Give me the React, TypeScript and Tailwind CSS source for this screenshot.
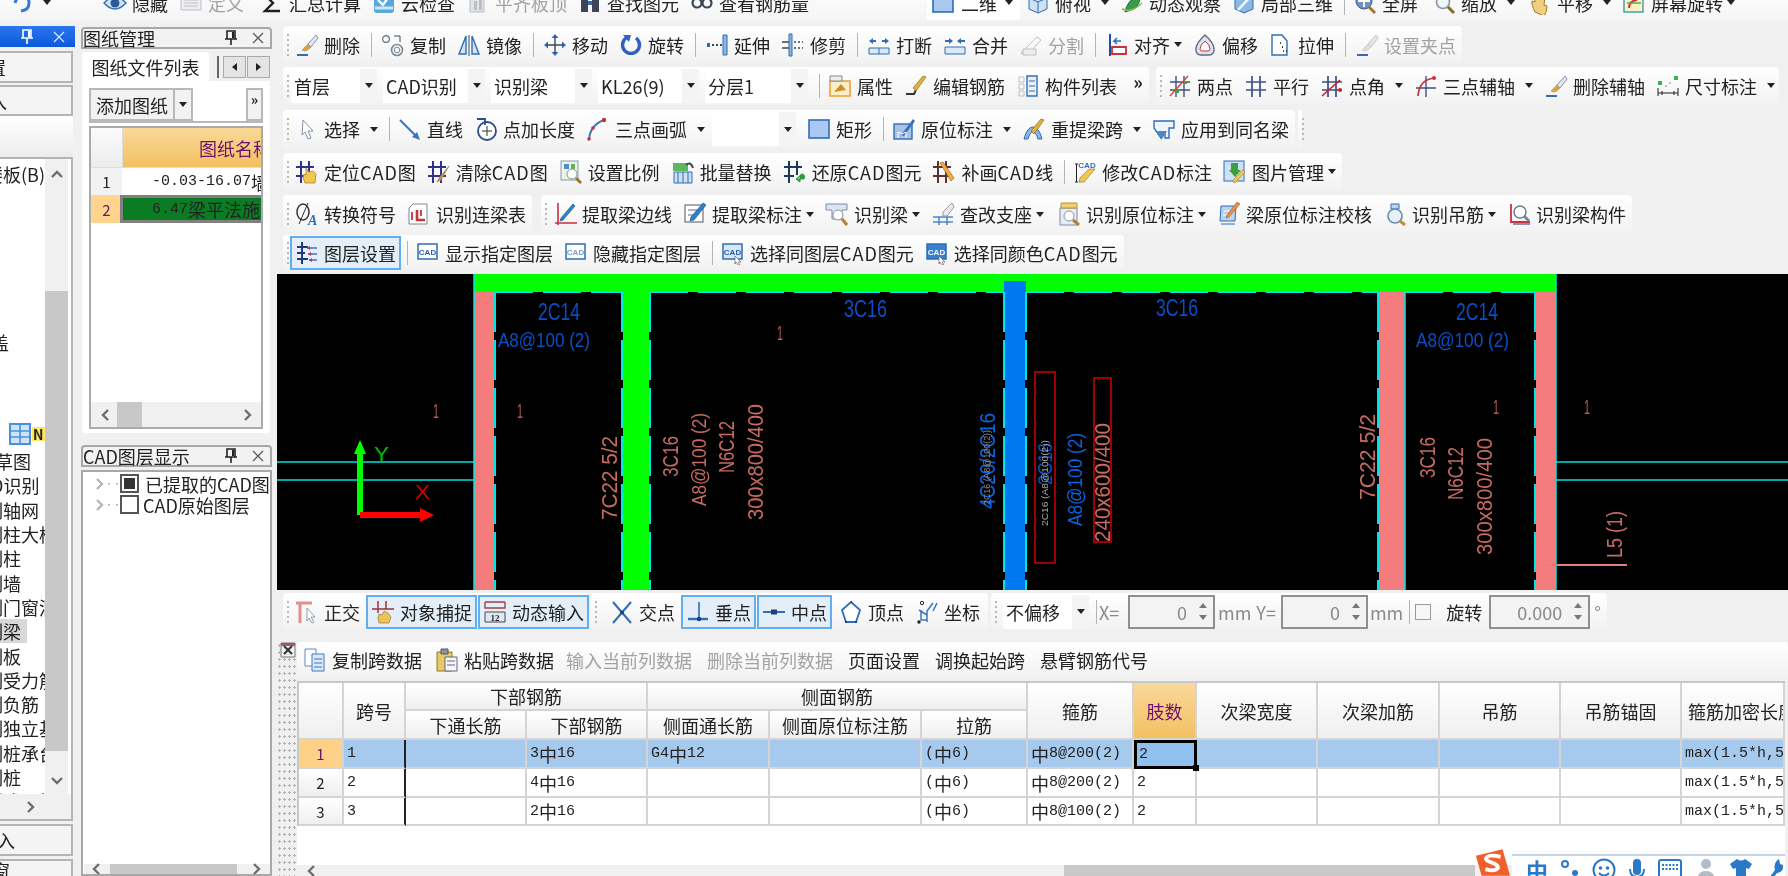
import React from "react";

const S = ({ children }: { children: React.ReactNode }) => (
  <svg viewBox="0 0 24 24" fill="none" className="h-6 w-6 shrink-0">
    {children}
  </svg>
);

const blue = "#2f6db5";
const dark = "#3c4658";
const red = "#c8323c";
const gold = "#e2b23e";
const pale = "#b9c0c8";

const brush = (c = "#8a90b0", h = "#d9a63c") => (
  <S>
    <path d="M21 2l-8 9 3 3 7-9z" fill="#e4e6f0" stroke={c} />
    <path d="M13 11l-6 6q4 3 9-3z" fill={h} stroke={c} strokeWidth=".6" />
    <path d="M2 22h11" stroke={blue} strokeWidth="2" />
  </S>
);
const pencil = (c = gold) => <path d="M22 3l-3-1-10 12 3 3z" fill={c} stroke="#8a6a20" strokeWidth=".7" />;
const glass = (c = "#8a6a20") => (
  <>
    <circle cx="11" cy="11" r="6.5" fill="#eef5fb" stroke="#8894a4" strokeWidth="1.6" />
    <path d="M16 16l6 6" stroke={c} strokeWidth="3" />
  </>
);
const cadBox = (fill: string, tc: string) => (
  <>
    <rect x="2" y="3" width="19" height="15" fill={fill} stroke={blue} strokeWidth="1.5" />
    <text x="11.5" y="14" textAnchor="middle" fontSize="8" fontWeight="700" fill={tc} fontFamily="Liberation Sans">CAD</text>
  </>
);
const axis = (
  <>
    <path d="M8 2v21M16 2v21M2 8h20M2 16h20" stroke="#3d4f86" strokeWidth="1.7" />
  </>
);

const ic: Record<string, React.ReactNode> = {
  eye: (
    <S>
      <path d="M1 12q11-12 22 0q-11 12-22 0z" fill="#cfe2f5" stroke={blue} strokeWidth="1.4" />
      <circle cx="12" cy="12" r="4.5" fill="#2c5a94" />
    </S>
  ),
  def: <S><path d="M2 5h20v14H2z" fill="#eee" stroke={pale} /><path d="M5 9h14M5 12h14M5 15h14" stroke={pale} /></S>,
  sigma: <S><path d="M20 4H5l8 8-8 8h15" stroke="#1f1f1f" strokeWidth="2.4" /></S>,
  cloud: <S><rect x="2" y="3" width="20" height="19" rx="3" fill="#58a8e0" /><path d="M6 9l5 5 7-10" stroke="#fff" strokeWidth="2.4" /><path d="M3 17h18" stroke="#cfe8f8" strokeWidth="3" /></S>,
  flush: <S><path d="M4 3h14v18H4z" fill="#e2e2e2" stroke={pale} /><path d="M8 10h3v9H8zM13 7h3v12h-3z" fill={pale} /></S>,
  find: <S><path d="M3 6h7v15H3zM14 6h7v15h-7z" fill={dark} /><path d="M10 10h4v4h-4z" fill={blue} /></S>,
  rebar: <S><circle cx="7" cy="12" r="4.5" stroke={dark} strokeWidth="2.2" /><circle cx="17" cy="12" r="4.5" stroke={dark} strokeWidth="2.2" /><path d="M11 12h2" stroke={dark} strokeWidth="2" /></S>,
  flat: <S><rect x="2" y="3" width="20" height="18" fill="#a9c8f0" stroke={blue} strokeWidth="1.6" /></S>,
  top: <S><path d="M3 7l9-4 9 4v11l-9 4-9-4z" fill="#cfe0f2" stroke={blue} /><path d="M3 7l9 4 9-4M12 11v11" stroke={blue} /></S>,
  orbit: <S><path d="M5 21q2-12 15-18q1 10-6 15z" fill="#3e9a48" stroke="#28703a" /><path d="M2 18q10 4 20-6" stroke="#8ab858" strokeWidth="1.5" /></S>,
  local: <S><path d="M3 7l9-4 9 4v11l-9 4-9-4z" fill="#8cb8e4" stroke={blue} /><path d="M6 19L20 4" stroke="#f4f8fc" strokeWidth="2.5" /></S>,
  full: <S><circle cx="11" cy="10" r="8" fill="#6f92c4" stroke="#3a5a8c" /><path d="M11 4v12M5 10h12" stroke="#fff" strokeWidth="2" /><path d="M16 16l6 6" stroke="#a07a28" strokeWidth="3" /></S>,
  zoom: <S>{glass()}</S>,
  hand: <S><path d="M7 21q-4-8-3-11l3 1V4l3 5 2-7 2 7 3-4-1 9 3 1q0 6-3 10z" fill="#f0cf80" stroke="#a07a28" /></S>,
  screen: <S><rect x="2" y="3" width="19" height="18" fill="#fbf2c4" stroke="#48a0a8" strokeWidth="1.5" /><path d="M7 17q0-7 8-8" stroke={red} strokeWidth="2" /><path d="M5 12h14" stroke="#64a850" strokeWidth="1.5" /></S>,
  brush: brush(),
  copy: <S><circle cx="5" cy="6" r="3.4" stroke="#667488" strokeWidth="1.2" /><circle cx="16" cy="17" r="5.5" stroke="#7b8898" strokeWidth="1.6" /><circle cx="16" cy="17" r="2.8" stroke="#7b8898" /><path d="M13 3h6v6" stroke={dark} /></S>,
  mirror: <S><path d="M12 2v21" stroke={dark} /><path d="M9 3L2 21h7zM15 3l7 18h-7z" fill="#d5e4f4" stroke={blue} strokeWidth="1.4" /></S>,
  move: <S><path d="M12 1l3.5 4h-7zM12 23l3.5-4h-7zM1 12l4-3.5v7zM23 12l-4-3.5v7z" fill={blue} /><path d="M12 4v16M4 12h16" stroke={dark} strokeWidth="1.4" /></S>,
  rotate: <S><path d="M7 5a8.5 8.5 0 1 0 10 0" stroke="#2f5fc0" strokeWidth="3.4" /><path d="M4 2l8 0-2 7z" fill="#2f5fc0" /></S>,
  extend: <S><path d="M18 2h4v20h-4z" fill="#8fb8e0" stroke={blue} /><path d="M2 10h3v4H2z" fill={blue} /><path d="M7 12h10" stroke={dark} strokeDasharray="2 2" strokeWidth="2" /></S>,
  trim: <S><path d="M8 1h3v22H8z" fill="#8fb8e0" stroke={blue} /><path d="M1 9h7M1 15h7" stroke={dark} strokeWidth="1.5" /><path d="M13 9h9M13 15h9" stroke={dark} strokeDasharray="2 2" strokeWidth="1.5" /></S>,
  break: <S><path d="M2 15h20v6H2z" fill="#dbe8f6" stroke={blue} /><path d="M2 8l4-3v2h3v2H6v2zM22 8l-4-3v2h-3v2h3v2z" fill={blue} /><path d="M12 15v6" stroke={blue} /></S>,
  merge: <S><path d="M2 14h20v7H2z" fill="#dbe8f6" stroke={blue} /><path d="M10 8L6 5v2H2v2h4v2zM14 8l4-3v2h4v2h-4v2z" fill={blue} /></S>,
  split: <S><path d="M2 20L18 4l4 3-14 15z" stroke={pale} /><path d="M4 16l13 0 0 6H4z" fill="#eee" stroke={pale} /></S>,
  align: <S><path d="M5 1v22" stroke="#274a9c" strokeWidth="2" /><path d="M7 14h14v7H7z" fill="#fff" stroke={red} strokeWidth="1.8" /><path d="M16 8H9l3-3M9 8l3 3" stroke={blue} strokeWidth="1.5" /></S>,
  offset: <S><path d="M12 2q9 8 9 14a5 5 0 0 1-5 6H8a5 5 0 0 1-5-6q0-6 9-14z" fill="#dde4ec" stroke="#5a6a80" strokeWidth="1.4" /><path d="M12 8q5 4 5 8a2 2 0 0 1-2 2H9a2 2 0 0 1-2-2q0-4 5-8z" fill="#fff" stroke={red} /></S>,
  stretch: <S><path d="M3 2h10l5 6v14H3z" fill="#fff" stroke={blue} strokeWidth="1.4" /><path d="M11 10h2M13 14h3M14 18h5" stroke={dark} strokeWidth="2" strokeDasharray="1 2" /></S>,
  gripPt: brush("#c4c4c4", "#dddddd"),
  prop: <S><rect x="2" y="7" width="20" height="15" fill="#fdeec8" stroke="#f0a038" strokeWidth="1.6" /><path d="M2 2h12v5H2z" fill="#eee" stroke="#888" /><path d="M6 18l7-8 5 6z" fill="#c89028" /></S>,
  edit: <S><path d="M2 20h8l2-4" stroke="#333" strokeWidth="2" />{pencil()}</S>,
  list: <S><path d="M3 3h5v5H3zM3 10h5v5H3zM3 17h5v5H3z" stroke={pale} /><path d="M11 2h10v20H11z" fill="#e8f0f8" stroke={blue} strokeWidth="1.4" /><path d="M13 7h6M13 12h6M13 17h6" stroke={blue} /></S>,
  two: <S><path d="M8 2v21M16 2v21M2 8h20M2 16h20" stroke="#3d4f86" strokeWidth="1.4" /><path d="M2 22L20 2" stroke="#d84040" strokeWidth="1.4" /><path d="M8 16h3v3H8zM16 7h3v3h-3z" fill="#45a045" /></S>,
  parallel: <S>{axis}</S>,
  angle: <S>{axis}<path d="M2 22L20 6" stroke="#d02020" strokeWidth="1.6" /><circle cx="20" cy="16" r="2" fill="#d02020" /></S>,
  arcAux: <S><path d="M12 2v21M2 14h20" stroke="#3d4f86" strokeWidth="1.4" /><path d="M4 22Q5 6 20 4" stroke={red} strokeWidth="1.7" /><circle cx="20" cy="4" r="2" fill={red} /></S>,
  dim: <S><path d="M2 7h4v4H2zM18 2h4v4h-4z" fill="#3cb44a" /><path d="M2 14v8M22 14v8M2 19h20" stroke="#222" /><path d="M6 17v4M18 17v4" stroke="#222" /><path d="M9 12h2M13 9h2" stroke="#888" /></S>,
  cursor: <S><path d="M8 3l10 11h-5l3 7-3 1-3-7-3 3z" fill="#fff" stroke="#8292a6" /></S>,
  line: <S><path d="M2 3l18 18" stroke="#3576b8" strokeWidth="2" /><path d="M22 23l-8-3 5-5z" fill="#3576b8" /></S>,
  circ: <S><circle cx="13" cy="14" r="9" fill="#fff" stroke="#2a4f88" strokeWidth="1.8" /><path d="M13 9v10M8 14h10" stroke="#333" /><path d="M3 2h8v6" stroke="#2a4f88" strokeWidth="1.8" /></S>,
  arc: <S><path d="M3 23Q4 8 18 3" stroke="#3d7ab8" strokeWidth="2" /><circle cx="18" cy="3" r="2.2" fill={red} /><circle cx="7" cy="11" r="1.8" fill={red} /><circle cx="3" cy="22" r="1.8" fill={red} /></S>,
  rect: <S><rect x="2" y="3" width="20" height="18" fill="#aac8f2" stroke={blue} strokeWidth="1.6" /></S>,
  mark: <S><rect x="2" y="7" width="18" height="15" fill="#a8c4e4" stroke={blue} strokeWidth="1.4" /><path d="M9 18L21 2l2 2-11 15z" fill="#3670c0" /><path d="M6 21v-6l4 2 4-2v6" stroke="#fff" /></S>,
  refetch: <S><path d="M2 22q3-12 9-12t9 12h-4q-2-7-5-7t-5 7z" fill="#8cb4e0" stroke={blue} />{pencil()}</S>,
  apply: <S><path d="M2 4h20v7l-5 0v10h-4v-6H9v6L2 11z" fill="#eef4fb" stroke={blue} strokeWidth="1.4" /><path d="M5 14h10l-5 8z" fill="#4e86cc" /></S>,
  locate: <S><path d="M6 1v22M14 1v22M1 7h18M1 16h18" stroke="#32328c" strokeWidth="2" /><path d="M10 23q-3-5-1-9l2 1V8l3 4 4-1 3 3-1 9z" fill="#f0c850" stroke="#a07a28" strokeWidth=".7" /></S>,
  clear: <S><path d="M6 1v22M14 1v22M1 7h18M1 16h18" stroke="#32328c" strokeWidth="2" /><path d="M22 6L12 18l-2 4 4-2z" fill="#d89030" stroke="#888" strokeWidth=".7" /></S>,
  scale: <S><rect x="2" y="1" width="17" height="19" fill="#f2f0d8" stroke="#78a0c0" /><path d="M5 4h5v5H5z" fill="#4a90d0" /><path d="M12 4h4v5h-4z" fill="#60b060" /><circle cx="13" cy="14" r="5" fill="#fff" stroke="#8894a4" /><path d="M17 18l5 5" stroke="#a07a28" strokeWidth="3" /></S>,
  batch: <S><path d="M2 3h15v8H2z" fill="#5cb860" /><path d="M3 12h18v11H3z" fill="#cfe0f0" stroke={blue} /><path d="M7 12v11M12 12v11M17 12v11" stroke={blue} /><path d="M15 5q5-4 7 3" stroke={dark} strokeWidth="2" /></S>,
  restore: <S><path d="M6 1v22M14 1v14M1 7h18M1 16h10" stroke="#1a3a5a" strokeWidth="2" /><path d="M13 19h8q2-5-3-5M13 19l4-3v6z" fill="#2f9a46" stroke="#2f9a46" /></S>,
  draw: <S><path d="M6 1v22M14 1v22M1 7h18M1 16h18" stroke="#5a3232" strokeWidth="2" /><path d="M8 3l3-1 11 16-3 3z" fill="#f0b040" stroke="#a85a20" strokeWidth=".7" /></S>,
  modcad: <S><path d="M2 4h3M3.5 4v18M2 22h3" stroke="#222" /><text x="14" y="8" textAnchor="middle" fontSize="8" fontWeight="700" fill={blue} fontFamily="Liberation Sans">CAD</text><path d="M22 9L11 22H6l1-4 9-9z" fill="#f0c850" stroke="#a07a28" strokeWidth=".7" /></S>,
  pic: <S><rect x="1" y="1" width="20" height="20" fill="#cfe0f4" stroke={blue} /><path d="M8 3h7v7h3l-6 7-6-7h2z" fill="#3ca040" /><path d="M22 12L12 23l-2-1 1-3 9-9z" fill="#f0c850" stroke="#a07a28" strokeWidth=".6" /></S>,
  phi: <S><ellipse cx="8" cy="10" rx="6" ry="8" stroke="#333" strokeWidth="1.5" /><path d="M13 1L4 22" stroke="#333" /><text x="13" y="23" fontSize="14" fontWeight="700" fontStyle="italic" fill="#2f6db5" fontFamily="Liberation Serif">A</text></S>,
  ltable: <S><path d="M6 2h14v20H2V6z" fill="#fff" stroke="#7a8898" /><path d="M10 8v10h8" stroke={red} strokeWidth="2.6" /><path d="M5 10v8M14 8v6" stroke={red} strokeWidth="1.8" /></S>,
  edge: <S><path d="M5 1v22M2 21h22" stroke={red} strokeWidth="1.6" /><path d="M22 4L10 18l-3 1 1-3L20 2z" fill="#2f80c8" stroke="#1f5a98" strokeWidth=".7" /></S>,
  mk: <S><rect x="2" y="3" width="18" height="17" fill="#fff" stroke="#556" /><path d="M5 8h9M5 13h9" stroke="#668" /><path d="M23 3L11 18l-4 1 1-4L20 1z" fill="#2f80c8" stroke="#1f5a98" strokeWidth=".7" /></S>,
  funnel: <S><path d="M1 2h21v6h-5v9H7V8H1z" fill="#dbe6f2" stroke="#7a8ca4" /><circle cx="13" cy="13" r="5" fill="#fff" stroke="#8894a4" /><path d="M17 17l5 6" stroke="#b08030" strokeWidth="3" /></S>,
  support: <S><path d="M2 15h20M2 20h20M8 15v8M16 15v8" stroke="#4a8ad0" strokeWidth="1.6" /><path d="M21 1l-9 9v4h4l7-9z" fill="#e8eaf0" stroke="#99a" /></S>,
  orig: <S><path d="M3 6h17v17H3z" fill="#e6edf5" stroke="#7a8ca4" /><path d="M4 1h16v5H4z" fill="#f0d070" stroke="#b89030" /><circle cx="12" cy="14" r="5" fill="#fff" stroke="#8894a4" /><path d="M16 18l6 5" stroke="#b08030" strokeWidth="3" /></S>,
  verify: <S><path d="M4 4h15l-1 15H3z" fill="#b8d4f0" stroke={blue} /><path d="M7 9h8M6 13h8" stroke="#fff" /><path d="M23 2L12 15l-3 1 1-3L20 0z" fill="#e89048" stroke="#a85a20" strokeWidth=".6" /><path d="M4 22h14" stroke={blue} /></S>,
  hang: <S><path d="M8 2h8v5H8z" fill="#bcd4ee" stroke={blue} /><circle cx="12" cy="14" r="7" fill="#e4f0fa" stroke="#6a8ab0" strokeWidth="1.6" /><path d="M17 19l5 4" stroke="#c09030" strokeWidth="3" /></S>,
  comp: <S><path d="M4 2v18h19" stroke={red} strokeWidth="1.8" /><circle cx="13" cy="10" r="6" fill="#fff" stroke="#6a7a90" strokeWidth="1.5" /><path d="M17 14l5 5" stroke="#7a8898" strokeWidth="3" /><path d="M6 22h17" stroke="#8a96a8" strokeWidth="2" /></S>,
  layer: <S><path d="M7 1v22M2 6h11M2 12h8M2 18h11" stroke="#1f3a7a" strokeWidth="2" /><path d="M12 7h10M13 13h9M14 19h8" stroke="#3f70c0" strokeWidth="1.5" /><path d="M12 7l3-2v4zM13 13l3-2v4zM14 19l3-2v4z" fill={red} /></S>,
  cadShow: <S>{cadBox("#fff", "#2a5ca8")}</S>,
  cadHide: <S>{cadBox("#fff", "#7aa0d0")}</S>,
  cadSel: <S>{cadBox("#d8e8f8", "#2a5ca8")}<path d="M14 15l6 6-3 0 2 3-2 0-2-3-1 2z" fill="#fff" stroke="#667" strokeWidth=".7" /></S>,
  cadCol: <S>{cadBox("#3a7fd0", "#fff")}<path d="M14 15l6 6-3 0 2 3-2 0-2-3-1 2z" fill="#fff" stroke="#667" strokeWidth=".7" /></S>,
  ortho: <S><path d="M1 3h16M5 3v20" stroke="#e09090" strokeWidth="3" /><path d="M12 8l8 9h-4l3 5-2 1-3-5-2 3z" fill="#fff" stroke="#7a8898" strokeWidth=".8" /></S>,
  snap: <S><path d="M7 1v12M15 1v8M1 9h22" stroke="#a03030" strokeWidth="1.5" /><path d="M8 23q-2-6 0-9l3 1 2-4 4 2 3 4-2 6z" fill="#eac35c" stroke="#a07a28" strokeWidth=".7" /></S>,
  dyn: <S><path d="M2 2h20M2 2v6h20V2" stroke="#a04040" strokeWidth="1.4" /><path d="M2 12h20v10H2z" fill="#dfe8f0" stroke="#445" /><text x="12" y="21" textAnchor="middle" fontSize="9" fontWeight="700" fill="#223" fontFamily="Liberation Serif">12</text></S>,
  cross: <S><path d="M3 2l18 21M21 2L3 23" stroke="#2f6db5" strokeWidth="2" /><circle cx="12" cy="12.5" r="2" fill="#1f3f80" /></S>,
  perp: <S><path d="M2 19h20" stroke="#2f6db5" strokeWidth="2.4" /><path d="M13 2v17" stroke="#2f6db5" strokeWidth="1.6" /><circle cx="13" cy="19" r="2.2" fill="#1f3f80" /></S>,
  mid: <S><path d="M1 12h22" stroke="#2f6db5" strokeWidth="2" /><rect x="9" y="9.5" width="6" height="5" fill="#1f3f80" /></S>,
  vertex: <S><path d="M12 2l9 8-4 12H7L3 10z" fill="#fff" stroke="#2f6db5" strokeWidth="1.8" /><path d="M12 1h1v2h-1zM6 21h2v2H6zM16 21h2v2h-2z" fill="#1f3f80" /></S>,
  coord: <S><path d="M6 10v10h6M18 3l-6 8v11M18 11l4-8M4 10l8 5" stroke="#3a76bc" strokeWidth="1.5" /><circle cx="7" cy="3" r="1.7" stroke="#222" /><circle cx="4" cy="22" r="1.7" fill="#222" /></S>,
  pgCopy: <S><path d="M2 1h11v17H2z" fill="#fff" stroke="#5a8ac4" /><path d="M9 6h12v17H9z" fill="#dbe8f8" stroke="#3f78c0" /><path d="M11 11h8M11 15h8M11 19h8" stroke="#3f78c0" /></S>,
  paste: <S><path d="M2 4h15v19H2z" fill="#e8c868" stroke="#94782c" /><path d="M6 1h7v5H6z" fill="#8894a4" stroke="#556" /><path d="M10 9h12v14H10z" fill="#f4f6fa" stroke="#667" /><path d="M12 13h8M12 17h8" stroke="#667" /></S>,
};

type ToolProps = {
  icon?: string;
  label: string;
  caret?: "near" | "wide";
  dim?: boolean;
  active?: boolean;
  cls?: string;
};

const Caret = ({ cls = "" }: { cls?: string }) => (
  <span className={`inline-block h-0 w-0 shrink-0 border-x-[4px] border-t-[5px] border-x-transparent border-t-[#222] ${cls}`} />
);

// CAD sits a little wider in the original font
const Label = ({ t }: { t: string }) => (
  <span>
    {t.split("CAD").map((p, i) => (
      <React.Fragment key={i}>
        {i > 0 && <span className="tracking-[1px]">CAD</span>}
        {p}
      </React.Fragment>
    ))}
  </span>
);

const Tool = ({ icon, label, caret, dim, active, cls = "" }: ToolProps) => (
  <div
    className={`flex shrink-0 items-center whitespace-nowrap ${dim ? "text-[#a2a2a2]" : ""} ${
      active ? "-mx-[5px] h-[34px] border-2 border-[#62aeef] bg-[#e3eef9] px-[3px]" : ""
    } ${cls}`}
  >
    {icon && <span className="mr-[5px]">{ic[icon]}</span>}
    <Label t={label} />
    {caret === "near" && <Caret cls="ml-[4px]" />}
    {caret === "wide" && <Caret cls="ml-[10px]" />}
  </div>
);

const Sep = ({ loose }: { loose?: boolean }) => (
  <span className={`h-[24px] w-px shrink-0 bg-[#b4b4b4] ${loose ? "-mr-[2px]" : "-mr-[3px]"}`} />
);

const Grip = () => (
  <span className="-mr-[5px] flex h-[22px] w-[2px] shrink-0 flex-col justify-between">
    {[0, 1, 2, 3, 4].map((i) => (
      <span key={i} className="h-[2px] w-[2px] bg-[#b8b8b8]" />
    ))}
  </span>
);

const Bar = ({ children, cls = "" }: { children: React.ReactNode; cls?: string }) => (
  <div className={`flex w-fit shrink-0 items-center gap-[11px] rounded-sm bg-gradient-to-b from-white to-[#f2f2f2] pl-[4px] ${cls}`}>
    {children}
  </div>
);

const Combo = ({ label, w }: { label: string; w: string }) => (
  <div className={`flex h-[34px] shrink-0 items-center justify-between bg-white pl-[3px] ${w}`}>
    <span className="whitespace-nowrap">{label}</span>
    <span className="flex h-full w-[17px] items-center justify-center bg-[#f4f4f4]">
      <Caret />
    </span>
  </div>
);

const Spin = ({ value, w }: { value: string; w: string }) => (
  <div className={`flex h-[34px] shrink-0 items-center border-2 border-[#8f8f8f] bg-[#f3f3f3] text-[#8a8a8a] ${w}`}>
    <span className="flex-1 text-right">{value}</span>
    <span className="ml-[12px] mr-[6px] flex flex-col gap-[7px]">
      <span className="h-0 w-0 border-x-[4px] border-b-[5px] border-x-transparent border-b-[#777]" />
      <span className="h-0 w-0 border-x-[4px] border-t-[5px] border-x-transparent border-t-[#777]" />
    </span>
  </div>
);

const Chev = ({ d, cls = "" }: { d: string; cls?: string }) => (
  <svg viewBox="0 0 12 12" className={`h-3 w-3 shrink-0 ${cls}`} fill="none">
    <path d={d} stroke="#6e6e6e" strokeWidth="2.4" />
  </svg>
);

const Pin = ({ light }: { light?: boolean }) => (
  <svg viewBox="0 0 14 16" className="h-4 w-[14px]" fill="none">
    <path d="M3 1h8v8H3zM1 9h12M7 9v6" stroke={light ? "#fff" : "#222"} strokeWidth="1.6" />
    <path d="M8 2h2v6H8z" fill={light ? "#fff" : "#222"} />
  </svg>
);

const Close = ({ light }: { light?: boolean }) => (
  <svg viewBox="0 0 12 12" className="h-3 w-3" fill="none">
    <path d="M1 1l10 10M11 1L1 11" stroke={light ? "#dbe8ff" : "#555"} strokeWidth="1.2" />
  </svg>
);

const PaneTitle = ({ title, cls = "" }: { title: string; cls?: string }) => (
  <div className={`ml-[8px] flex h-[22px] w-[191px] items-center justify-between rounded-t-sm border-2 border-[#a8a8a8] bg-[#f2f2f2] pr-[6px] ${cls}`}>
    <span className="whitespace-nowrap">{title}</span>
    <span className="flex items-center gap-[14px]">
      <Pin />
      <Close />
    </span>
  </div>
);

const treeLines = [
  { t: "草图", c: "-ml-[5px]" },
  { t: "D识别", c: "-ml-[9px]" },
  { t: "制轴网", c: "-ml-[15px]" },
  { t: "制柱大样", c: "-ml-[15px]" },
  { t: "制柱", c: "-ml-[15px]" },
  { t: "制墙", c: "-ml-[15px]" },
  { t: "制门窗洞", c: "-ml-[15px]" },
  { t: "制梁", c: "-ml-[15px] w-[42px] bg-[#d8d8d8]" },
  { t: "制板", c: "-ml-[15px]" },
  { t: "制受力筋", c: "-ml-[15px]" },
  { t: "制负筋", c: "-ml-[15px]" },
  { t: "制独立基础", c: "-ml-[15px]" },
  { t: "制桩承台", c: "-ml-[15px]" },
  { t: "制桩", c: "-ml-[15px]" },
  { t: "制成孔桩", c: "-ml-[15px]" },
];

const LeftPanel = () => (
  <div className="flex w-[73px] shrink-0 flex-col">
    <div className="mt-[5px] flex h-[21px] w-[75px] items-center justify-end gap-[19px] bg-gradient-to-b from-[#2a76ee] to-[#0a58dc] pr-[10px]">
      <Pin light />
      <Close light />
    </div>
    <div className="mt-[4px] flex h-[32px] items-center overflow-hidden border-2 border-l-0 border-[#b4b4b4] bg-[#f4f4f4]">
      <span className="-ml-[12px] whitespace-nowrap">置</span>
    </div>
    <div className="mt-[2px] flex h-[31px] items-center overflow-hidden border-2 border-l-0 border-[#b4b4b4] bg-[#f4f4f4]">
      <span className="-ml-[11px] whitespace-nowrap">入</span>
    </div>
    <div className="h-[41px] bg-gradient-to-b from-white to-[#ececec]" />
    <div className="flex h-[664px] flex-col border-2 border-l-0 border-[#b4b4b4] bg-[#f0f0f0]">
      <div className="flex h-[635px] bg-white">
        <div className="w-[45px] overflow-hidden pt-[3px]">
          <div className="flex h-[24px] w-[45px] items-center justify-end overflow-hidden whitespace-nowrap">楼板(B)</div>
          <div className="h-[144px]" />
          <div className="flex h-[24px] items-center overflow-hidden whitespace-nowrap">
            <span className="-ml-[9px]">盖</span>
          </div>
          <div className="h-[68px]" />
          <div className="flex h-[24px] items-center pl-[9px]">
            <svg viewBox="0 0 22 22" className="h-[22px] w-[22px] shrink-0" fill="none">
              <rect x="1" y="1" width="20" height="20" fill="#cfe4fb" stroke="#4a90e0" strokeWidth="2" />
              <path d="M11 1v20M1 8h20M1 14h20" stroke="#4a90e0" strokeWidth="1.6" />
            </svg>
            <span className="ml-[1px] bg-[#ffe85a] px-px text-[14px] font-bold leading-none">N</span>
          </div>
          <div className="mt-[3px]">
            {treeLines.map((l) => (
              <div key={l.t} className={`flex h-[24.3px] items-center whitespace-nowrap ${l.c}`}>
                {l.t}
              </div>
            ))}
          </div>
        </div>
        <div className="flex w-[23px] flex-col bg-[#f0f0f0]">
          <div className="flex h-[132px] justify-center pt-[9px]">
            <Chev d="M1 9l5-5 5 5" />
          </div>
          <div className="h-[460px] bg-[#c8c8c8]" />
          <div className="flex flex-1 justify-center pt-[24px]">
            <Chev d="M1 3l5 5 5-5" />
          </div>
        </div>
      </div>
      <div className="flex flex-1 items-center pl-[25px]">
        <Chev d="M3 1l5 5-5 5" />
      </div>
    </div>
    <div className="mt-[3px] flex h-[32px] items-center overflow-hidden border-2 border-l-0 border-[#b4b4b4] bg-[#f4f4f4]">
      <span className="-ml-[3px] whitespace-nowrap">入</span>
    </div>
    <div className="mt-[3px] flex flex-1 overflow-hidden border-2 border-b-0 border-l-0 border-[#b4b4b4] bg-[#f4f4f4]">
      <span className="-ml-[8px] whitespace-nowrap">窗</span>
    </div>
  </div>
);

const gridMono = "font-['Liberation_Mono','Noto_Sans_CJK_SC',monospace] text-[15px]";

const MiddlePanel = () => (
  <div className="flex w-[204px] shrink-0 flex-col">
    <PaneTitle title="图纸管理" cls="mt-[6px]" />
    <div className="ml-[9px] mt-[3px] flex h-[29px] w-[188px] items-end">
      <div className="flex h-full w-[130px] items-center justify-center rounded-t-sm bg-white">图纸文件列表</div>
      <div className="ml-[8px] h-[22px] w-[3px] self-center border-l-2 border-[#666]" />
      <div className="ml-[3px] flex h-[22px] gap-px self-center">
        <span className="flex w-[23px] items-center justify-center border border-[#aaa] bg-[#e4e4e4]">
          <span className="h-0 w-0 border-y-[4px] border-r-[5px] border-y-transparent border-r-[#222]" />
        </span>
        <span className="flex w-[23px] items-center justify-center border border-[#aaa] bg-[#e4e4e4]">
          <span className="h-0 w-0 border-y-[4px] border-l-[5px] border-y-transparent border-l-[#222]" />
        </span>
      </div>
    </div>
    <div className="ml-[9px] flex h-[352px] w-[188px] flex-col bg-white px-[7px] pt-[7px]">
      <div className="flex h-[35px] items-start justify-between border-b-2 border-[#b8b8b8]">
        <div className="flex h-[33px]">
          <span className="flex w-[86px] items-center justify-center border-2 border-[#b8b8b8] bg-[#f2f2f2]">添加图纸</span>
          <span className="flex w-[18px] items-center justify-center border-y-2 border-r-2 border-[#b8b8b8] bg-[#f2f2f2]">
            <Caret />
          </span>
        </div>
        <span className="h-[33px] w-[17px] border-2 border-[#b8b8b8] bg-[#f2f2f2] text-center text-[14px] font-bold leading-[18px]">»</span>
      </div>
      <div className="mt-[3px] flex h-[303px] flex-col overflow-hidden border-2 border-[#aaa] bg-white">
        <div className="flex h-[39px]">
          <div className="w-[31px] shrink-0 bg-gradient-to-b from-[#fbfbfb] to-[#ececec]" />
          <div className="flex flex-1 items-center overflow-hidden whitespace-nowrap border-l border-[#ddd] bg-gradient-to-b from-[#f9d898] to-[#f2c060] pl-[76px] text-[#6d1070]">
            图纸名称
          </div>
        </div>
        <div className="flex h-[28px] border-t border-[#ddd]">
          <div className="flex w-[31px] shrink-0 items-center justify-center bg-[#f2f2f2] text-[15px]">1</div>
          <div className={`flex flex-1 items-center overflow-hidden whitespace-nowrap pl-[30px] ${gridMono}`}>
            -0.03-16.07<span className="font-['Noto_Sans_CJK_SC',sans-serif] text-[18px]">墙</span>
          </div>
        </div>
        <div className="flex h-[28px]">
          <div className="flex w-[29px] shrink-0 items-center justify-center bg-[#ffd48c] pl-[2px] text-[15px] text-[#6d1070]">2</div>
          <div className={`flex flex-1 items-center overflow-hidden whitespace-nowrap border-[3px] border-r-0 border-[#808080] bg-[#0b7c24] pl-[29px] ${gridMono}`}>
            6.47<span className="font-['Noto_Sans_CJK_SC',sans-serif] text-[18px]">梁平法施</span>
          </div>
        </div>
        <div className="flex-1" />
        <div className="flex h-[25px] items-center bg-[#f0f0f0] pl-[8px]">
          <Chev d="M9 1L4 6l5 5" />
          <span className="ml-[6px] h-full w-[25px] bg-[#c8c8c8]" />
          <span className="flex-1" />
          <Chev d="M3 1l5 5-5 5" cls="mr-[7px]" />
        </div>
      </div>
    </div>
    <PaneTitle title="CAD图层显示" cls="mt-[12px]" />
    <div className="ml-[8px] mt-[3px] flex w-[191px] flex-1 flex-col border-2 border-[#a8a8a8] bg-white pl-[11px]">
      <div className="mt-[1px] flex h-[21px] items-center overflow-hidden whitespace-nowrap">
        <Chev d="M3 1l5 5-5 5" cls="opacity-50" />
        <span className="-mx-[1px] text-[8px] leading-none text-[#888]">··</span>
        <span className="mr-[6px] flex h-[19px] w-[19px] shrink-0 items-center justify-center border-2 border-[#555]">
          <span className="h-[11px] w-[11px] bg-[#333]" />
        </span>
        已提取的CAD图层
      </div>
      <div className="flex h-[21px] items-center whitespace-nowrap">
        <Chev d="M3 1l5 5-5 5" cls="opacity-50" />
        <span className="-mx-[1px] text-[8px] leading-none text-[#888]">··</span>
        <span className="mr-[4px] h-[19px] w-[19px] shrink-0 border-2 border-[#555]" />
        CAD原始图层
      </div>
      <div className="flex-1" />
      <div className="-ml-[10px] flex h-[10px] items-center bg-[#f0f0f0] pl-[6px]">
        <Chev d="M9 1L4 6l5 5" />
        <span className="ml-[8px] h-full w-[127px] bg-[#c8c8c8]" />
        <span className="flex-1" />
        <Chev d="M3 1l5 5-5 5" cls="mr-[7px]" />
      </div>
    </div>
  </div>
);

const H = ({ x, y, w, fs, fill, t }: { x: number; y: number; w: number; fs: number; fill: string; t: string }) => (
  <text x={x} y={y} fontSize={fs} fill={fill} fontFamily="Liberation Sans" textLength={w} lengthAdjust="spacingAndGlyphs">
    {t}
  </text>
);

const V = ({ x, y0, y1, fs = 22, fill = "#c86a62", t }: { x: number; y0: number; y1: number; fs?: number; fill?: string; t: string }) => (
  <text
    transform={`rotate(-90 ${x} ${y0})`}
    x={x}
    y={y0}
    fontSize={fs}
    fill={fill}
    fontFamily="Liberation Sans"
    textLength={y0 - y1}
    lengthAdjust="spacingAndGlyphs"
  >
    {t}
  </text>
);

const edgesV = [495, 622, 650, 1004, 1026, 1378, 1535];
const spansH = [
  [495, 622],
  [650, 1004],
  [1026, 1378],
  [1405, 1535],
];

const CadCanvas = () => (
  <svg viewBox="277 274 1511 316" className="mt-[4px] block h-[316px] w-[1511px] shrink-0 bg-black">
    <path d="M277 462h197M277 480h197M1556 462h232M1556 480h232" stroke="#00a8a8" strokeWidth="2" />
    <rect x="474" y="292" width="21" height="298" fill="#f47c7c" />
    <rect x="1378" y="292" width="27" height="298" fill="#f47c7c" />
    <rect x="1535" y="292" width="21" height="298" fill="#f47c7c" />
    <rect x="622" y="292" width="28" height="298" fill="#00ff00" />
    <rect x="474" y="274" width="1082" height="18" fill="#00ff00" />
    <rect x="1004" y="281" width="22" height="309" fill="#0078f0" />
    {edgesV.map((x) => (
      <g key={x}>
        <line x1={x} y1="292" x2={x} y2="590" stroke="#000" strokeWidth="2" />
        <line x1={x} y1="292" x2={x} y2="590" stroke="#00e6e6" strokeWidth="2" strokeDasharray="40 8" />
      </g>
    ))}
    <path d="M474 274v316M1405 292v298M1556 274v316" stroke="#00e6e6" strokeWidth="1.5" />
    {spansH.map(([a, b]) => (
      <line key={a} x1={a} y1="292" x2={b} y2="292" stroke="#00e6e6" strokeWidth="2" strokeDasharray="38 10" />
    ))}
    <H x={538} y={320} w={42} fs={23} fill="#0a4fc8" t="2C14" />
    <H x={498} y={347} w={92} fs={20} fill="#0a4fc8" t="A8@100 (2)" />
    <H x={844} y={317} w={43} fs={23} fill="#0a4fc8" t="3C16" />
    <H x={1156} y={316} w={42} fs={23} fill="#0a4fc8" t="3C16" />
    <H x={1456} y={320} w={42} fs={23} fill="#0a4fc8" t="2C14" />
    <H x={1416} y={347} w={93} fs={20} fill="#0a4fc8" t="A8@100 (2)" />
    {[
      [436, 418],
      [520, 418],
      [780, 340],
      [1496, 414],
      [1587, 414],
    ].map(([x, y]) => (
      <H key={x} x={x - 3} y={y} w={6} fs={20} fill="#b85a58" t="1" />
    ))}
    <V x={617} y0={520} y1={436} t="7C22 5/2" />
    <V x={678} y0={477} y1={436} t="3C16" />
    <V x={706} y0={506} y1={413} fs={20} t="A8@100 (2)" />
    <V x={734} y0={473} y1={421} t="N6C12" />
    <V x={763} y0={520} y1={404} t="300x800/400" />
    <V x={995} y0={509} y1={413} fill="#0a64e0" t="4C20/2C16" />
    <V x={990} y0={505} y1={430} fs={9} fill="#8a8a8a" t="2C16 (A8@100(2))" />
    <rect x="1035" y="372" width="20" height="191" fill="none" stroke="#d00000" strokeWidth="1.5" />
    <rect x="1094" y="378" width="17" height="164" fill="none" stroke="#d00000" strokeWidth="1.5" />
    <V x={1052} y0={485} y1={443} fs={20} fill="#0a4fc8" t="2C16" />
    <V x={1048} y0={526} y1={440} fs={9} fill="#a8a8a8" t="2C16 (A8@100(2))" />
    <V x={1082} y0={526} y1={433} fs={20} fill="#0a64e0" t="A8@100 (2)" />
    <V x={1110} y0={542} y1={423} t="240x600/400" />
    <V x={1375} y0={500} y1={414} t="7C22 5/2" />
    <V x={1435} y0={478} y1={437} t="3C16" />
    <V x={1463} y0={500} y1={447} t="N6C12" />
    <V x={1492} y0={555} y1={438} t="300x800/400" />
    <V x={1622} y0={558} y1={511} t="L5 (1)" />
    <path d="M1545 565h82" stroke="#e08080" strokeWidth="2" />
    <path d="M360 515v-64" stroke="#00ff00" strokeWidth="6" />
    <path d="M360 440l6 14h-12z" fill="#00ff00" />
    <path d="M360 515h62" stroke="#ff0000" strokeWidth="6" />
    <path d="M434 515l-14-7v14z" fill="#ff0000" />
    <H x={374} y={461} w={15} fs={20} fill="#00c000" t="Y" />
    <H x={415} y={499} w={15} fs={20} fill="#d00000" t="X" />
  </svg>
);

const colsClass = "grid grid-cols-[45px_62px_121px_121px_122px_152px_106px_106px_63px_121px_122px_121px_121px_103px] grid-rows-[28px_29px_29px_29px_28px]";

const hd = "flex items-center justify-center whitespace-nowrap overflow-hidden border-b-2 border-r-2 border-[#d4d4d4] bg-gradient-to-b from-white to-[#efefef]";
const cell = `flex items-center overflow-hidden whitespace-nowrap border-b-2 border-r-2 border-[#d4d4d4] pl-[3px] ${gridMono}`;

const Rebar = ({ t }: { t: string }) => (
  <>
    {t.split("中").map((p, i) => (
      <React.Fragment key={i}>
        {i > 0 && <span className="font-['Noto_Sans_CJK_SC',sans-serif] text-[18px]">中</span>}
        {p}
      </React.Fragment>
    ))}
  </>
);

const rows = [
  { n: "1", span: "1", low: "3中16", side: "G4中12", tie: "(中6)", st: "中8@200(2)" },
  { n: "2", span: "2", low: "4中16", side: "", tie: "(中6)", st: "中8@200(2)" },
  { n: "3", span: "3", low: "2中16", side: "", tie: "(中6)", st: "中8@100(2)" },
];

const SpanTable = () => (
  <div className={`${colsClass} border-l-2 border-t-2 border-[#c8c8c8] bg-white`}>
    <div className={`${hd} row-span-2`} />
    <div className={`${hd} row-span-2`}>跨号</div>
    <div className={`${hd} col-span-2`}>下部钢筋</div>
    <div className={`${hd} col-span-3`}>侧面钢筋</div>
    <div className={`${hd} row-span-2`}>箍筋</div>
    <div className="row-span-2 flex items-center justify-center border-b-2 border-r-2 border-[#d4d4d4] bg-gradient-to-b from-[#fad89c] to-[#f2c05e] text-[#6d1070]">肢数</div>
    <div className={`${hd} row-span-2`}>次梁宽度</div>
    <div className={`${hd} row-span-2`}>次梁加筋</div>
    <div className={`${hd} row-span-2`}>吊筋</div>
    <div className={`${hd} row-span-2`}>吊筋锚固</div>
    <div className={`${hd} row-span-2 justify-start pl-[6px]`}>箍筋加密长度</div>
    <div className={hd}>下通长筋</div>
    <div className={hd}>下部钢筋</div>
    <div className={hd}>侧面通长筋</div>
    <div className={hd}>侧面原位标注筋</div>
    <div className={hd}>拉筋</div>
    {rows.map((r, i) => {
      const bg = i === 0 ? "bg-[#a6c9ee]" : "";
      return (
        <React.Fragment key={r.n}>
          <div
            className={`flex items-center justify-center border-b-2 border-r-2 border-[#d4d4d4] text-[15px] ${
              i === 0 ? "bg-[#fdd187] text-[#6d1070]" : "bg-gradient-to-b from-white to-[#efefef]"
            }`}
          >
            {r.n}
          </div>
          <div className={`${cell} ${bg} border-r-[#222]`}>{r.span}</div>
          <div className={`${cell} ${bg}`} />
          <div className={`${cell} ${bg}`}><Rebar t={r.low} /></div>
          <div className={`${cell} ${bg}`}>{r.side && <Rebar t={r.side} />}</div>
          <div className={`${cell} ${bg}`} />
          <div className={`${cell} ${bg}`}><Rebar t={r.tie} /></div>
          <div className={`${cell} ${bg}`}><Rebar t={r.st} /></div>
          {i === 0 ? (
            <div className="relative flex items-center border-[3px] border-black bg-[#8fc0f0] pl-[2px] font-['Liberation_Mono',monospace] text-[15px]">
              2
              <span className="absolute -bottom-[5px] -right-[5px] h-[6px] w-[6px] bg-black" />
            </div>
          ) : (
            <div className={cell}>2</div>
          )}
          <div className={`${cell} ${bg}`} />
          <div className={`${cell} ${bg}`} />
          <div className={`${cell} ${bg}`} />
          <div className={`${cell} ${bg}`} />
          <div className={`${cell} ${bg}`}>max(1.5*h,500)</div>
        </React.Fragment>
      );
    })}
  </div>
);

const ImeBar = () => (
  <div className="absolute bottom-0 right-[3px] flex h-[27px] items-end">
    <svg viewBox="0 0 40 28" className="h-[27px] w-[38px]">
      <path d="M2 7L30 0l8 28H8z" fill="#f0602c" />
      <path d="M28 8q-12-3-15 1c-3 5 14 5 12 11q-3 4-13 1" fill="none" stroke="#fff" strokeWidth="4" />
    </svg>
    <div className="flex h-[22px] w-[273px] items-start gap-[12px] overflow-hidden border-l-0 border-t-2 border-[#c4d6e6] bg-white pl-[14px] pt-[2px]">
      <span className="text-[22px] font-bold leading-none text-[#2a78c8]">中</span>
      <svg viewBox="0 0 20 20" className="h-5 w-5 shrink-0"><circle cx="5" cy="6" r="3" fill="none" stroke="#2a78c8" strokeWidth="2" /><circle cx="15" cy="15" r="3" fill="#2a78c8" /></svg>
      <svg viewBox="0 0 24 24" className="h-6 w-6 shrink-0"><circle cx="12" cy="12" r="10.5" fill="none" stroke="#2a78c8" strokeWidth="2" /><circle cx="8.5" cy="10" r="1.8" fill="#2a78c8" /><circle cx="15.5" cy="10" r="1.8" fill="#2a78c8" /><path d="M7 15q5 5 10 0" fill="none" stroke="#2a78c8" strokeWidth="2" /></svg>
      <svg viewBox="0 0 18 24" className="h-6 w-[18px] shrink-0"><rect x="5" y="1" width="8" height="16" rx="4" fill="#2a78c8" /><path d="M2 11q0 8 7 8t7-8" fill="none" stroke="#2a78c8" strokeWidth="2" /></svg>
      <svg viewBox="0 0 24 24" className="h-6 w-6 shrink-0"><rect x="1" y="2" width="22" height="20" rx="2" fill="none" stroke="#2a78c8" strokeWidth="2" /><path d="M4 7h16M4 11h16" stroke="#2a78c8" strokeWidth="2" strokeDasharray="2 1.5" /></svg>
      <svg viewBox="0 0 24 24" className="h-6 w-6 shrink-0"><circle cx="12" cy="6" r="5" fill="#b0bccc" /><path d="M3 24q0-11 9-11t9 11z" fill="#b0bccc" /></svg>
      <svg viewBox="0 0 22 24" className="h-6 w-[22px] shrink-0"><path d="M7 1L0 6l3 5 3-1v14h10V10l3 1 3-5-7-5q-4 3-8 0z" fill="#2a78c8" /></svg>
      <svg viewBox="0 0 20 24" className="h-6 w-5 shrink-0"><path d="M2 24L11 12q-2-7 4-11l1 5 3 1q1 7-6 8L6 24z" fill="#2a78c8" /></svg>
    </div>
  </div>
);

const MainPanel = () => (
  <div className="flex w-[1511px] shrink-0 flex-col">
    <Bar cls="ml-[6px] mt-[5px] h-[37px] pr-[6px]">
      <Grip />
      <Tool icon="brush" label="删除" />
      <Sep loose />
      <Tool icon="copy" label="复制" />
      <Tool icon="mirror" label="镜像" />
      <Sep loose />
      <Tool icon="move" label="移动" />
      <Tool icon="rotate" label="旋转" />
      <Sep loose />
      <Tool icon="extend" label="延伸" />
      <Tool icon="trim" label="修剪" />
      <Sep loose />
      <Tool icon="break" label="打断" />
      <Tool icon="merge" label="合并" />
      <Tool icon="split" label="分割" dim />
      <Sep loose />
      <Tool icon="align" label="对齐" caret="near" />
      <Tool icon="offset" label="偏移" />
      <Tool icon="stretch" label="拉伸" />
      <Sep loose />
      <Tool icon="gripPt" label="设置夹点" dim />
    </Bar>
    <div className="ml-[6px] mt-[4px] flex h-[37px] items-stretch gap-[7px]">
      <Bar cls="pr-[1px]">
        <Grip />
        <div className="-ml-[4px] flex gap-[6px]">
          <Combo label="首层" w="w-[86px]" />
          <Combo label="CAD识别" w="w-[102px]" />
          <Combo label="识别梁" w="w-[101px]" />
          <Combo label="KL26(9)" w="w-[101px]" />
          <Combo label="分层1" w="w-[103px]" />
        </div>
        <Sep />
        <Tool icon="prop" label="属性" />
        <Tool icon="edit" label="编辑钢筋" />
        <Tool icon="list" label="构件列表" />
        <span className="-mt-[10px] w-[20px] text-center text-[18px] font-bold leading-none">»</span>
      </Bar>
      <Bar cls="pr-[4px]">
        <Grip />
        <Tool icon="two" label="两点" />
        <Tool icon="parallel" label="平行" />
        <Tool icon="angle" label="点角" caret="wide" />
        <Tool icon="arcAux" label="三点辅轴" caret="wide" />
        <Tool icon="brush" label="删除辅轴" />
        <Tool icon="dim" label="尺寸标注" caret="wide" />
      </Bar>
    </div>
    <div className="ml-[6px] mt-[6px] flex h-[38px] items-stretch gap-[3px]">
      <Bar cls="pr-[6px]">
        <Grip />
        <Tool icon="cursor" label="选择" caret="wide" />
        <Sep />
        <Tool icon="line" label="直线" />
        <Tool icon="circ" label="点加长度" />
        <Tool icon="arc" label="三点画弧" caret="wide" />
        <div className="-ml-[4px]">
          <Combo label="" w="w-[84px]" />
        </div>
        <Tool icon="rect" label="矩形" />
        <Sep />
        <Tool icon="mark" label="原位标注" caret="wide" />
        <Tool icon="refetch" label="重提梁跨" caret="wide" />
        <Tool icon="apply" label="应用到同名梁" />
      </Bar>
      <Bar cls="w-[45px]">
        <Grip />
      </Bar>
    </div>
    <Bar cls="ml-[6px] mt-[5px] h-[37px] pr-[6px]">
      <Grip />
      <Tool icon="locate" label="定位CAD图" />
      <Tool icon="clear" label="清除CAD图" />
      <Tool icon="scale" label="设置比例" />
      <Tool icon="batch" label="批量替换" />
      <Tool icon="restore" label="还原CAD图元" />
      <Tool icon="draw" label="补画CAD线" />
      <Sep />
      <Tool icon="modcad" label="修改CAD标注" />
      <Tool icon="pic" label="图片管理" caret="near" />
    </Bar>
    <div className="ml-[6px] mt-[5px] flex h-[38px] items-stretch gap-[9px]">
      <Bar cls="pr-[6px]">
        <Grip />
        <Tool icon="phi" label="转换符号" />
        <Tool icon="ltable" label="识别连梁表" />
      </Bar>
      <Bar cls="pr-[6px]">
        <Grip />
        <Tool icon="edge" label="提取梁边线" />
        <Tool icon="mk" label="提取梁标注" caret="near" />
        <Tool icon="funnel" label="识别梁" caret="near" />
        <Tool icon="support" label="查改支座" caret="near" />
        <Tool icon="orig" label="识别原位标注" caret="near" cls="ml-[2px]" />
        <Tool icon="verify" label="梁原位标注校核" />
        <Tool icon="hang" label="识别吊筋" caret="near" />
        <Tool icon="comp" label="识别梁构件" />
      </Bar>
    </div>
    <Bar cls="ml-[6px] mt-[2px] h-[35px] pr-[6px]">
      <Grip />
      <Tool icon="layer" label="图层设置" active />
      <Sep />
      <Tool icon="cadShow" label="显示指定图层" />
      <Tool icon="cadHide" label="隐藏指定图层" />
      <Sep />
      <Tool icon="cadSel" label="选择同图层CAD图元" />
      <Tool icon="cadCol" label="选择同颜色CAD图元" />
    </Bar>
    <CadCanvas />
    <div className="ml-[6px] mt-[3px] flex h-[37px] items-stretch gap-[3px]">
      <Bar cls="pr-[4px]">
        <Grip />
        <Tool icon="ortho" label="正交" />
        <Tool icon="snap" label="对象捕捉" active />
        <Tool icon="dyn" label="动态输入" active />
      </Bar>
      <Bar cls="pr-[8px]">
        <Grip />
        <Tool icon="cross" label="交点" cls="ml-[7px]" />
        <Tool icon="perp" label="垂点" active />
        <Tool icon="mid" label="中点" active />
        <Tool icon="vertex" label="顶点" cls="ml-[1px]" />
        <Tool icon="coord" label="坐标" />
      </Bar>
      <Bar cls="pr-[6px]">
        <Grip />
        <div className="flex items-center">
          <Combo label="不偏移" w="w-[86px]" />
          <span className="ml-[7px] h-[24px] w-px bg-[#b4b4b4]" />
          <span className="ml-[2px] w-[26px] text-[#8a8a8a]">X=</span>
          <Spin value="0" w="ml-[3px] w-[87px]" />
          <span className="ml-[3px] text-[#8a8a8a]">mm</span>
          <span className="ml-[5px] text-[#8a8a8a]">Y=</span>
          <Spin value="0" w="ml-[5px] w-[87px]" />
          <span className="ml-[2px] text-[#8a8a8a]">mm</span>
          <span className="ml-[6px] h-[24px] w-px bg-[#b4b4b4]" />
          <span className="ml-[5px] h-[16px] w-[16px] border border-[#999] bg-[#f6f6f6]" />
          <span className="ml-[15px]">旋转</span>
          <Spin value="0.000" w="ml-[7px] w-[101px]" />
          <span className="ml-[4px] text-[#8a8a8a]">°</span>
        </div>
      </Bar>
    </div>
    <div className="mt-[12px] flex min-h-0 flex-1">
      <div className="relative w-[20px] shrink-0 bg-[radial-gradient(circle,#b4b4b4_1px,transparent_1.4px)] bg-[length:5px_7px]">
        <svg viewBox="0 0 16 16" className="absolute left-[3px] top-0 h-4 w-4 bg-[#f0f0f0]">
          <path d="M1 1h14v14H1z" fill="#eee" stroke="#777" />
          <path d="M4 4l8 8M12 4l-8 8" stroke="#333" strokeWidth="2" />
          <path d="M1 1h14v3H1z" fill="#a05a5a" />
        </svg>
      </div>
      <div className="flex w-[1491px] flex-col">
        <div className="flex h-[36px] shrink-0 items-center gap-[15px] rounded-t-sm bg-gradient-to-b from-white to-[#f2f2f2] pl-[6px]">
          <Tool icon="pgCopy" label="复制跨数据" />
          <Tool icon="paste" label="粘贴跨数据" cls="-ml-[2px]" />
          <Tool label="输入当前列数据" dim cls="-ml-[3px]" />
          <Tool label="删除当前列数据" dim />
          <Tool label="页面设置" />
          <Tool label="调换起始跨" />
          <Tool label="悬臂钢筋代号" />
        </div>
        <div className="mt-[3px] flex min-h-0 w-[1488px] flex-1 flex-col bg-white">
          <SpanTable />
          <div className="flex-1" />
          <div className="flex h-[11px] items-center bg-[#f0f0f0] pl-[8px]">
            <Chev d="M9 1L4 6l5 5" />
            <span className="ml-[747px] h-full w-[411px] bg-[#c8c8c8]" />
          </div>
        </div>
      </div>
    </div>
  </div>
);

export default function App() {
  return (
    <div className="relative flex h-[876px] w-[1788px] flex-col overflow-hidden bg-[#f0f0f0] font-['Noto_Sans_CJK_SC','Noto_Sans',sans-serif] text-[18px] leading-none text-[#222] blur-[0.35px]">
      <div className="h-[21px] shrink-0 overflow-hidden">
        <div className="-mt-[16px] flex h-[37px] items-center gap-[11px] bg-gradient-to-b from-white to-[#f4f4f4]">
          <svg viewBox="0 0 20 20" className="ml-[12px] h-5 w-5 shrink-0" fill="none">
            <path d="M3 10q2-7 8-7t6 7-8 8" stroke="#3a78d8" strokeWidth="3" />
          </svg>
          <Caret />
          <span className="w-[30px]" />
          <Tool icon="eye" label="隐藏" />
          <Tool icon="def" label="定义" dim />
          <Tool icon="sigma" label="汇总计算" cls="ml-[5px]" />
          <Tool icon="cloud" label="云检查" />
          <Tool icon="flush" label="平齐板顶" dim />
          <Tool icon="find" label="查找图元" />
          <Tool icon="rebar" label="查看钢筋量" />
          <div className="ml-[107px] flex h-[34px] w-[93px] items-center justify-between bg-white pl-[4px] pr-[7px]">
            <span className="flex items-center gap-[6px]">
              {ic.flat}
              二维
            </span>
            <Caret />
          </div>
          <Tool icon="top" label="俯视" caret="wide" cls="-ml-[5px]" />
          <Tool icon="orbit" label="动态观察" />
          <Tool icon="local" label="局部三维" />
          <Sep />
          <Tool icon="full" label="全屏" />
          <Tool icon="zoom" label="缩放" caret="wide" cls="ml-[3px]" />
          <Tool icon="hand" label="平移" caret="wide" cls="ml-[2px]" />
          <Tool icon="screen" label="屏幕旋转" caret="near" />
        </div>
      </div>
      <div className="flex h-[855px]">
        <LeftPanel />
        <MiddlePanel />
        <MainPanel />
      </div>
      <ImeBar />
    </div>
  );
}
